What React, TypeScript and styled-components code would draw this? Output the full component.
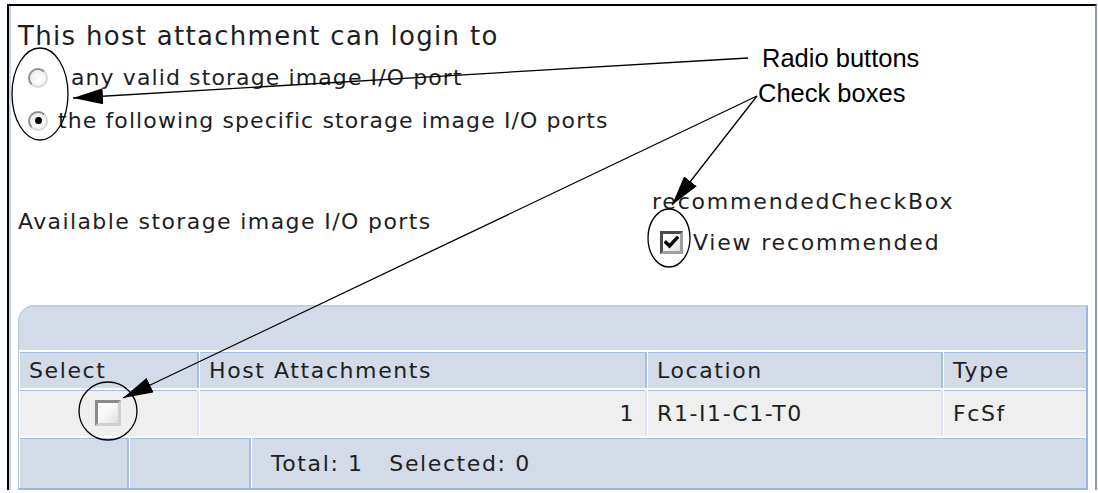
import React from "react";
import styled, { createGlobalStyle } from "styled-components";

const Global = createGlobalStyle`
  html, body { margin: 0; padding: 0; background: #ffffff; }
  body { font-family: "DejaVu Sans", sans-serif; color: #1a1a1a; }
`;

const Page = styled.div`
  position: relative;
  width: 1098px;
  height: 493px;
  overflow: hidden;
  background: #ffffff;
`;

const Frame = styled.div`
  margin: 4px 0 0 7px;
  width: 1090px;
  height: 486px;
  box-sizing: border-box;
  border-top: 2px solid #000;
  border-left: 2px solid #000;
  border-right: 2px solid #8c9bb0;
  display: flex;
  flex-direction: column;
`;

const Inner = styled.div`
  flex: 1;
  border-left: 2px solid #c8d6ee;
  padding: 0 0 0 7px;
  display: flex;
  flex-direction: column;
`;

const Title = styled.div`
  font-size: 26px;
  line-height: 30px;
  margin-top: 15px;
  margin-bottom: 5px;
  color: #1e1e1e;
  letter-spacing: 1.3px;
`;

const RadioRow = styled.div`
  display: flex;
  align-items: center;
  height: 43px;
  padding-left: 10px;
`;

const Radio = styled.span<{ $checked?: boolean }>`
  width: 20px;
  height: 20px;
  border-radius: 50%;
  box-sizing: border-box;
  border: 2px solid #8e8e8e;
  border-bottom-color: #d8d8d8;
  border-right-color: #d8d8d8;
  background: radial-gradient(circle at 60% 60%, #ffffff 0%, #f2f2f2 60%, #dcdcdc 100%);
  display: flex;
  align-items: center;
  justify-content: center;
  flex-shrink: 0;
  &::after {
    content: "";
    width: 7px;
    height: 7px;
    border-radius: 50%;
    background: #000;
    display: ${(p) => (p.$checked ? "block" : "none")};
  }
`;

const RadioLabel = styled.span<{ $indent: number }>`
  font-size: 22px;
  letter-spacing: 1.1px;
  margin-left: ${(p) => p.$indent}px;
  color: #1e1e1e;
`;

const PortsSection = styled.div`
  display: flex;
  align-items: flex-start;
  margin-top: 47px;
  height: 116px;
`;

const AvailLabel = styled.div`
  font-size: 22px;
  letter-spacing: 1.4px;
  line-height: 26px;
  width: 634px;
  margin-top: 20px;
  color: #1e1e1e;
`;

const Recommend = styled.div`
  display: flex;
  flex-direction: column;
  font-size: 22px;
  letter-spacing: 1.8px;
  color: #1e1e1e;
`;

const RecTitle = styled.div`
  line-height: 26px;
`;

const CheckRow = styled.div`
  display: flex;
  align-items: center;
  gap: 10px;
  height: 26px;
  padding-left: 8px;
  margin-top: 14px;
`;

const CheckBox = styled.span<{ $size: number; $dark?: boolean }>`
  width: ${(p) => p.$size}px;
  height: ${(p) => p.$size}px;
  box-sizing: border-box;
  border: 3px solid ${(p) => (p.$dark ? "#4a4a4a" : "#8a8a8a")};
  border-right-color: ${(p) => (p.$dark ? "#a0a0a0" : "#d0d0d0")};
  border-bottom-color: ${(p) => (p.$dark ? "#a0a0a0" : "#d0d0d0")};
  background: linear-gradient(135deg, #ffffff 0%, #f6f6f6 50%, #e0e0e0 100%);
  display: flex;
  align-items: center;
  justify-content: center;
  flex-shrink: 0;
`;

const Table = styled.div`
  width: 1070px;
  flex: 1;
  display: flex;
  flex-direction: column;
  background: #d3dae8;
  border-top-left-radius: 16px;
  border-top: 2px solid #c2cde3;
  border-left: 1px solid #b8c6e2;
  border-right: 2px solid #9fb5e1;
  border-bottom: 2px solid #9fb5e1;
  box-sizing: border-box;
`;

const Caption = styled.div`
  height: 43px;
  flex-shrink: 0;
`;

const Row = styled.div<{ $cols: string; $bg: string; $h?: number }>`
  display: grid;
  grid-template-columns: ${(p) => p.$cols};
  height: ${(p) => (p.$h ? `${p.$h}px` : "auto")};
  flex: ${(p) => (p.$h ? "0 0 auto" : "1")};
  background: ${(p) => p.$bg};
  border-top: 2px solid #ffffff;
  box-shadow: inset 0 1px 0 #a8bde4;
  box-sizing: border-box;
`;

const Cell = styled.div<{ $align?: string; $divider?: string }>`
  display: flex;
  align-items: center;
  justify-content: ${(p) => p.$align || "flex-start"};
  padding: 0 10px;
  font-size: 22px;
  letter-spacing: 1.6px;
  color: #1e1e1e;
  border-right: 2px solid ${(p) => p.$divider || "#a8bde4"};
  box-shadow: inset 1px 0 0 #ffffff;
  &:last-child { border-right: none; }
`;

const FooterText = styled.span`
  padding-left: 10px;
  white-space: pre;
`;

const Overlay = styled.svg`
  position: absolute;
  left: 0;
  top: 0;
  pointer-events: none;
`;

const Note = styled.text`
  font-family: "Liberation Sans", Arial, sans-serif;
  font-size: 25.5px;
  fill: #000;
`;

const Check = () => (
  <svg width="15" height="13" viewBox="0 0 15 13">
    <path d="M2 6.5 L5.5 10 L13 2" stroke="#000" strokeWidth="3.4" fill="none" strokeLinecap="square" />
  </svg>
);

const cols = "180px 448px 296px 1fr";

export default function App() {
  return (
    <>
      <Global />
      <Page>
        <Frame>
          <Inner>
            <Title>This host attachment can login to</Title>
            <RadioRow>
              <Radio />
              <RadioLabel $indent={23}>any valid storage image I/O port</RadioLabel>
            </RadioRow>
            <RadioRow>
              <Radio $checked />
              <RadioLabel $indent={10}>the following specific storage image I/O ports</RadioLabel>
            </RadioRow>
            <PortsSection>
              <AvailLabel>Available storage image I/O ports</AvailLabel>
              <Recommend>
                <RecTitle>recommendedCheckBox</RecTitle>
                <CheckRow>
                  <CheckBox $size={23} $dark>
                    <Check />
                  </CheckBox>
                  <span>View recommended</span>
                </CheckRow>
              </Recommend>
            </PortsSection>
            <Table>
              <Caption />
              <Row $cols={cols} $bg="#d3dae8" $h={38}>
                <Cell>Select</Cell>
                <Cell>Host Attachments</Cell>
                <Cell>Location</Cell>
                <Cell>Type</Cell>
              </Row>
              <Row $cols={cols} $bg="#efefef" $h={48}>
                <Cell $align="center" $divider="#dde4f2">
                  <CheckBox $size={26} />
                </Cell>
                <Cell $align="flex-end" $divider="#dde4f2">1</Cell>
                <Cell $divider="#dde4f2">R1-I1-C1-T0</Cell>
                <Cell>FcSf</Cell>
              </Row>
              <Row $cols="110px 122px 1fr" $bg="#d3dae8">
                <Cell />
                <Cell />
                <Cell>
                  <FooterText>{"Total: 1   Selected: 0"}</FooterText>
                </Cell>
              </Row>
            </Table>
          </Inner>
        </Frame>
        <Overlay width="1098" height="493" viewBox="0 0 1098 493">
          <defs>
            <marker id="big" viewBox="0 0 30 16" markerWidth="30" markerHeight="16" refX="30" refY="8" orient="auto" markerUnits="userSpaceOnUse">
              <path d="M0 0 L30 8 L0 16 Z" fill="#000" />
            </marker>
          </defs>
          <ellipse cx="40" cy="94" rx="28" ry="46" fill="none" stroke="#000" strokeWidth="1.3" />
          <ellipse cx="669" cy="238" rx="21" ry="29" fill="none" stroke="#000" strokeWidth="1.3" />
          <circle cx="108" cy="411" r="29" fill="none" stroke="#000" strokeWidth="1.3" />
          <line x1="748" y1="58" x2="73" y2="98" stroke="#000" strokeWidth="1.3" markerEnd="url(#big)" />
          <line x1="757" y1="96" x2="672" y2="205" stroke="#000" strokeWidth="1.3" markerEnd="url(#big)" />
          <line x1="757" y1="96" x2="123" y2="398" stroke="#000" strokeWidth="1.3" markerEnd="url(#big)" />
          <Note x="762" y="67">Radio buttons</Note>
          <Note x="758" y="102">Check boxes</Note>
        </Overlay>
      </Page>
    </>
  );
}
